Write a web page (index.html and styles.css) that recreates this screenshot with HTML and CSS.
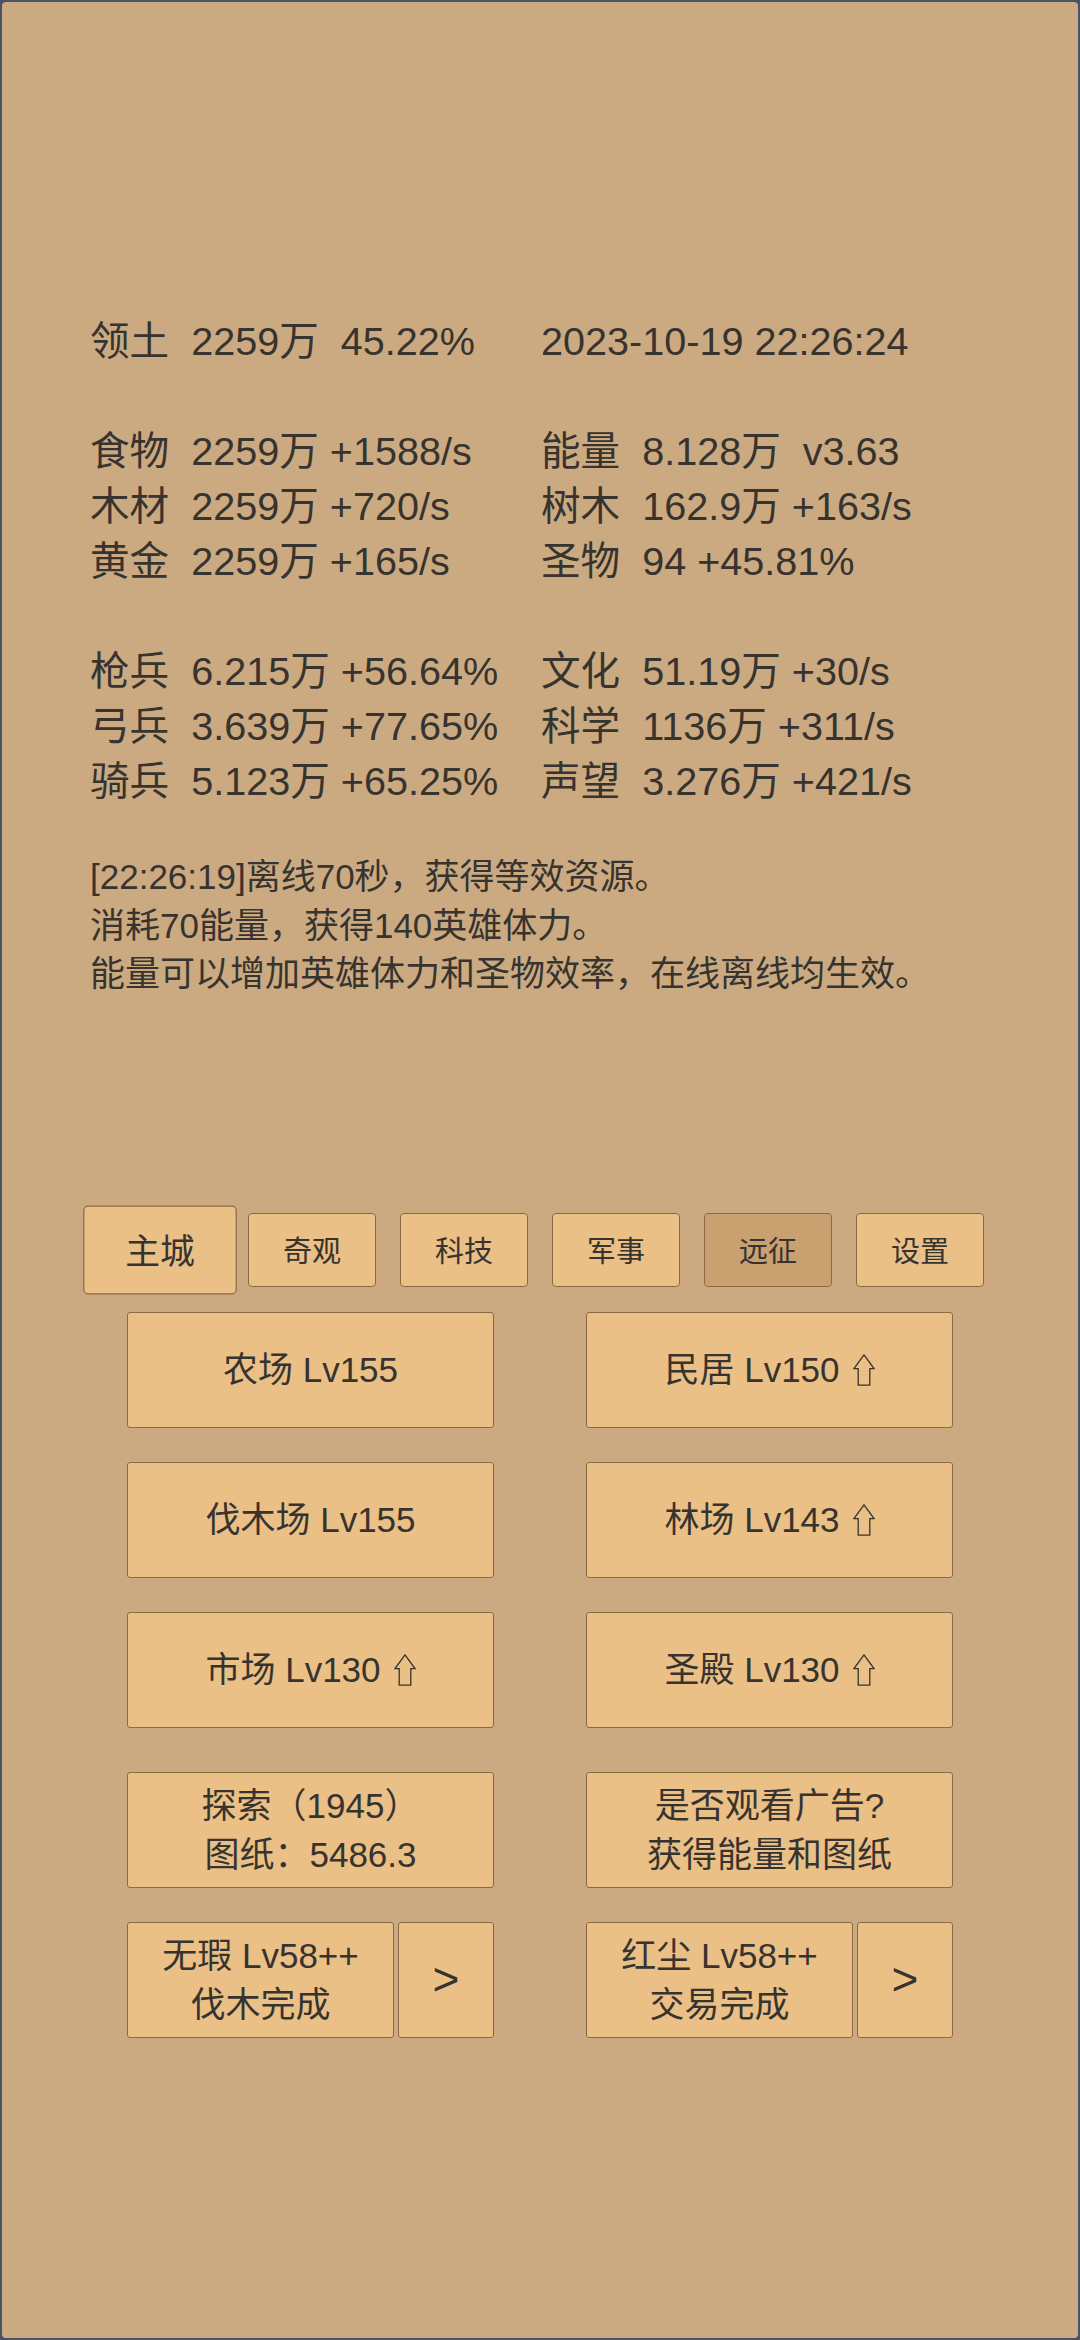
FILE: index.html
```html
<!DOCTYPE html>
<html lang="zh-CN">
<head>
<meta charset="utf-8">
<title>主城</title>
<link rel="stylesheet" href="styles.css">
</head>
<body>
<div class="screen">
  <div class="stats">
    <div class="group">
      <div class="cell">领土  2259万  45.22%</div>
      <div class="cell">2023-10-19 22:26:24</div>
    </div>
    <div class="group">
      <div class="cell">食物  2259万 +1588/s</div>
      <div class="cell">能量  8.128万  v3.63</div>
      <div class="cell">木材  2259万 +720/s</div>
      <div class="cell">树木  162.9万 +163/s</div>
      <div class="cell">黄金  2259万 +165/s</div>
      <div class="cell">圣物  94 +45.81%</div>
    </div>
    <div class="group">
      <div class="cell">枪兵  6.215万 +56.64%</div>
      <div class="cell">文化  51.19万 +30/s</div>
      <div class="cell">弓兵  3.639万 +77.65%</div>
      <div class="cell">科学  1136万 +311/s</div>
      <div class="cell">骑兵  5.123万 +65.25%</div>
      <div class="cell">声望  3.276万 +421/s</div>
    </div>
  </div>

  <div class="log">
    <div>[22:26:19]离线70秒，获得等效资源。</div>
    <div>消耗70能量，获得140英雄体力。</div>
    <div>能量可以增加英雄体力和圣物效率，在线离线均生效。</div>
  </div>

  <div class="tabs">
    <div class="tab tab-current">主城</div>
    <div class="tab">奇观</div>
    <div class="tab">科技</div>
    <div class="tab">军事</div>
    <div class="tab tab-dim">远征</div>
    <div class="tab">设置</div>
  </div>

  <div class="buildings">
    <div class="btn">农场 Lv155</div>
    <div class="btn">民居 Lv150<svg class="up" viewBox="0 0 22 32" width="22" height="32"><path d="M11 0.9 L21 14.6 L16.8 14.6 L16.8 31.2 L5.2 31.2 L5.2 14.6 L1 14.6 Z"/></svg></div>
    <div class="btn">伐木场 Lv155</div>
    <div class="btn">林场 Lv143<svg class="up" viewBox="0 0 22 32" width="22" height="32"><path d="M11 0.9 L21 14.6 L16.8 14.6 L16.8 31.2 L5.2 31.2 L5.2 14.6 L1 14.6 Z"/></svg></div>
    <div class="btn">市场 Lv130<svg class="up" viewBox="0 0 22 32" width="22" height="32"><path d="M11 0.9 L21 14.6 L16.8 14.6 L16.8 31.2 L5.2 31.2 L5.2 14.6 L1 14.6 Z"/></svg></div>
    <div class="btn">圣殿 Lv130<svg class="up" viewBox="0 0 22 32" width="22" height="32"><path d="M11 0.9 L21 14.6 L16.8 14.6 L16.8 31.2 L5.2 31.2 L5.2 14.6 L1 14.6 Z"/></svg></div>
  </div>

  <div class="actions">
    <div class="btn two">探索（1945）<br>图纸：5486.3</div>
    <div class="btn two">是否观看广告?<br>获得能量和图纸</div>
    <div class="split">
      <div class="btn two main">无瑕 Lv58++<br>伐木完成</div>
      <div class="btn arrow">&gt;</div>
    </div>
    <div class="split">
      <div class="btn two main">红尘 Lv58++<br>交易完成</div>
      <div class="btn arrow">&gt;</div>
    </div>
  </div>
</div>
</body>
</html>
```

FILE: styles.css
```css
html {
  background: #4a5468;
}
body {
  margin: 0;
  background: #4a5468;
}
.screen {
  box-sizing: border-box;
  width: 1080px;
  height: 2340px;
  background: #cbaa82;
  border: 2px solid #4a5468;
  border-radius: 6px;
  padding-top: 312px;
  color: #37332f;
  font-family: "Liberation Sans", "Noto Sans CJK SC", sans-serif;
  overflow: hidden;
}
.stats {
  padding-left: 88px;
  font-size: 39.6px;
}
.group {
  display: grid;
  grid-template-columns: 451px auto;
  grid-auto-rows: 55px;
  margin-bottom: 55px;
}
.group:last-child {
  margin-bottom: 0;
}
.cell {
  white-space: pre;
  line-height: 55px;
}
.log {
  margin-top: 44px;
  padding-left: 88px;
  font-size: 35px;
  line-height: 48.5px;
  white-space: nowrap;
}
.tabs {
  display: flex;
  justify-content: center;
  align-items: center;
  margin-top: 214px;
  height: 74px;
}
.tab {
  box-sizing: border-box;
  width: 128px;
  height: 74px;
  margin: 0 12px;
  display: flex;
  align-items: center;
  justify-content: center;
  background: #eac086;
  border: 1px solid #8a6a45;
  border-radius: 4px;
  font-size: 29px;
  padding-bottom: 2px;
}
.tab-current {
  transform: scale(1.2);
}
.tab-dim {
  background: #c9a06f;
}
.buildings,
.actions {
  display: grid;
  grid-template-columns: 367px 367px;
  column-gap: 92px;
  row-gap: 34px;
  justify-content: center;
  grid-auto-rows: 116px;
}
.buildings {
  margin-top: 25px;
}
.actions {
  margin-top: 44px;
}
.btn {
  box-sizing: border-box;
  display: flex;
  align-items: center;
  justify-content: center;
  text-align: center;
  background: #eac086;
  border: 1px solid #8a6a45;
  border-radius: 3px;
  font-size: 35px;
  line-height: 49px;
  white-space: nowrap;
}
.up {
  margin-left: 13px;
  fill: none;
  stroke: #37332f;
  stroke-width: 1.3;
  stroke-linejoin: miter;
}
.split {
  display: flex;
  gap: 4px;
}
.split .main {
  width: 267px;
}
.split .arrow {
  width: 96px;
  font-size: 46px;
}
```
